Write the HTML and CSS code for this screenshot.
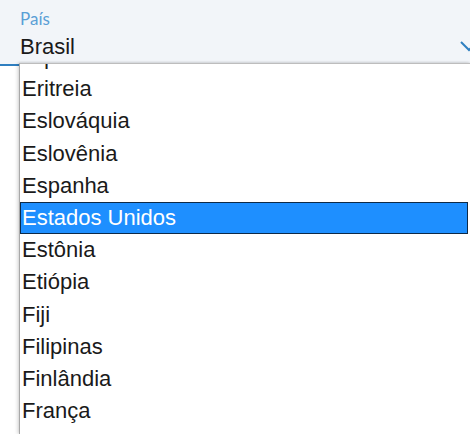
FILE: index.html
```html
<!DOCTYPE html>
<html lang="pt-BR">
<head>
<meta charset="utf-8">
<title>País</title>
<link rel="stylesheet" href="styles.css">
</head>
<body>
<div class="field">
  <div class="label">País</div>
  <div class="value">Brasil</div>
  <svg class="chevron" width="20" height="12" viewBox="0 0 20 12"><path d="M1 1 L9 9 L17 1" fill="none" stroke="#2f7fc0" stroke-width="2"/></svg>
</div>
<div class="dropdown">
  <ul class="list">
    <li class="item">Equador</li>
    <li class="item">Eritreia</li>
    <li class="item">Eslováquia</li>
    <li class="item">Eslovênia</li>
    <li class="item">Espanha</li>
    <li class="item selected">Estados Unidos</li>
    <li class="item">Estônia</li>
    <li class="item">Etiópia</li>
    <li class="item">Fiji</li>
    <li class="item">Filipinas</li>
    <li class="item">Finlândia</li>
    <li class="item">França</li>
    <li class="item">Gabão</li>
  </ul>
</div>
</body>
</html>
```

FILE: styles.css
```css
html, body {
  margin: 0;
  padding: 0;
  background: #ffffff;
  width: 470px;
  height: 434px;
  overflow: hidden;
  font-family: "Liberation Sans", Arial, sans-serif;
}

.field {
  position: relative;
  height: 66px;
  background: #f2f5f9;
  border-bottom: 2px solid #2f7fc0;
  padding-left: 20px;
  box-sizing: border-box;
}

.label {
  font-family: "Lato", "Open Sans", sans-serif;
  font-size: 17px;
  color: #5a9fd6;
  line-height: 20px;
  padding-top: 9px;
}

.value {
  font-size: 22px;
  color: #1a1a1a;
  line-height: 28px;
  padding-top: 4px;
}

.chevron {
  position: absolute;
  right: -10px;
  top: 41px;
}

.dropdown {
  position: absolute;
  left: 19px;
  top: 63px;
  right: 0;
  bottom: 0;
  background: #ffffff;
  border-left: 1px solid #a8a8a8;
  border-top: 1px solid #bdbdbd;
  box-shadow: -2px 0 3px rgba(0, 0, 0, 0.12), 0 -1px 2px rgba(0, 0, 0, 0.1);
  overflow: hidden;
}

.list {
  list-style: none;
  margin: -23px 0 0 0;
  padding: 0;
}

.item {
  height: 32.2px;
  line-height: 32.2px;
  font-size: 22px;
  color: #1a1a1a;
  padding-left: 2px;
  margin-right: 2px;
  white-space: nowrap;
}

.item.selected {
  background: #1e8fff;
  color: #ffffff;
  box-shadow: inset 0 0 0 1px #0d2a47;
}
```
